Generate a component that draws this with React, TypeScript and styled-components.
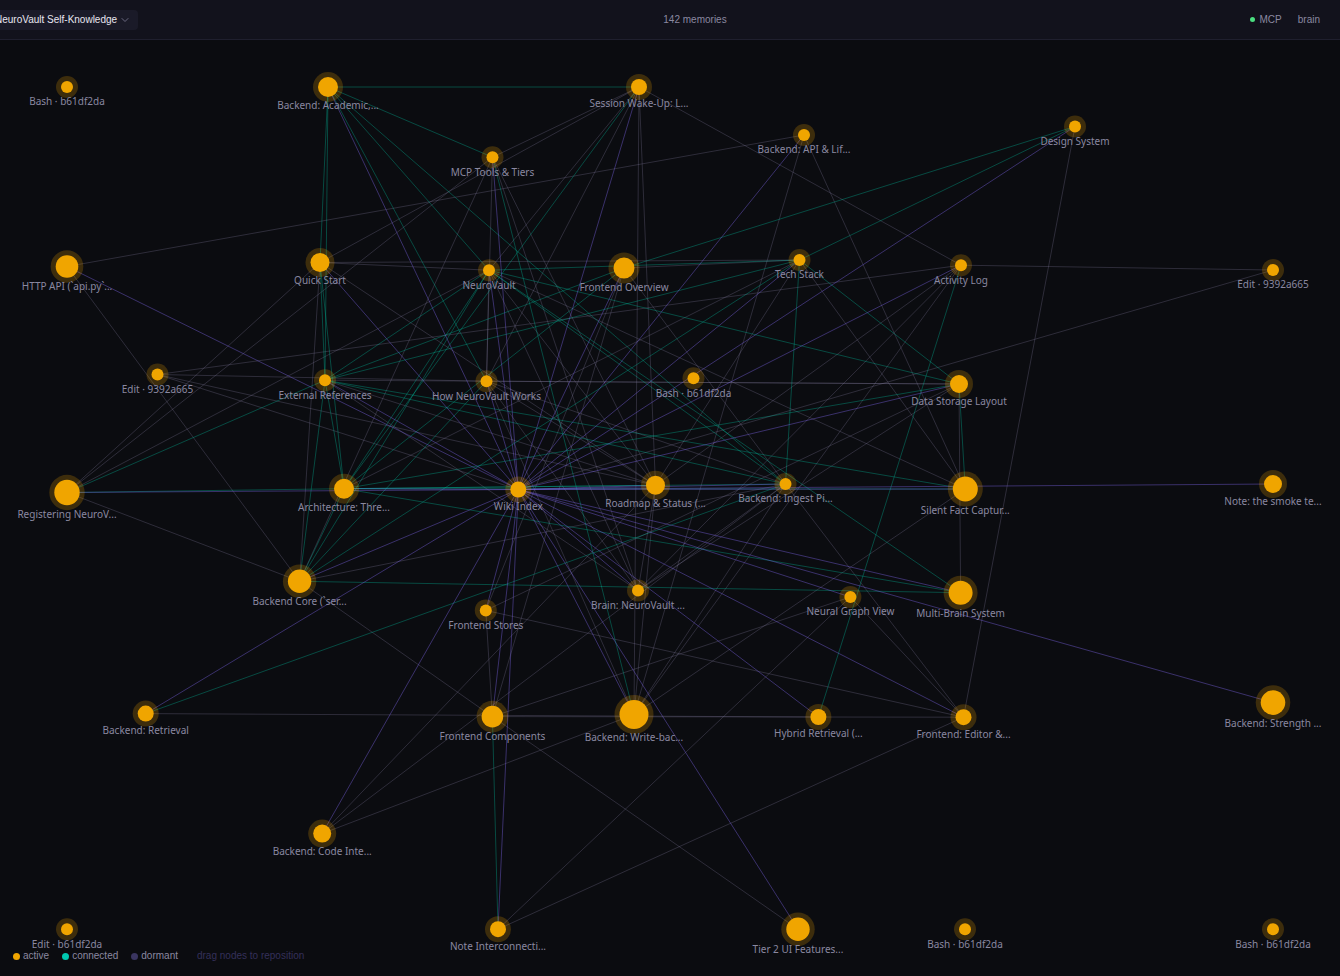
import React from "react";
import styled, { createGlobalStyle } from "styled-components";

const GlobalStyle = createGlobalStyle`
  html, body { margin: 0; padding: 0; background: #0b0c10; }
  *, *::before, *::after { box-sizing: border-box; }
`;

const Page = styled.div`
  display: flex;
  flex-direction: column;
  height: 100vh;
  overflow: hidden;
  background: #0b0c10;
  color: #8a88a0;
  font-family: "Liberation Sans", Arial, sans-serif;
  font-size: 10px;
  line-height: 12px;
`;

const TopBar = styled.header`
  display: grid;
  grid-template-columns: 1fr auto 1fr;
  align-items: center;
  flex: none;
  height: 40px;
  padding-right: 20px;
  padding-left: 70px;
  background: #12121c;
  border-bottom: 1px solid #1f1f2e;
`;

const VaultButton = styled.button`
  display: flex;
  align-items: center;
  justify-self: start;
  gap: 3px;
  height: 20px;
  margin-left: -86px;
  padding: 0 8px 0 11px;
  border: 0;
  border-radius: 4px;
  background: #1a1a28;
  color: #e8e6f0;
  font: inherit;
  white-space: nowrap;
  cursor: pointer;
`;

const Chevron = styled.svg`
  display: block;
  width: 10px;
  height: 10px;
  fill: none;
  stroke: #6a6880;
  stroke-linecap: round;
  stroke-linejoin: round;
`;

const MemoryCount = styled.span`
  white-space: nowrap;
`;

const StatusGroup = styled.div`
  display: flex;
  align-items: center;
  justify-self: end;
  gap: 16px;
`;

const Status = styled.span`
  display: flex;
  align-items: center;
  gap: 5px;
`;

const Dot = styled.span<{ $color: string; $size: number }>`
  width: ${(p) => p.$size}px;
  height: ${(p) => p.$size}px;
  border-radius: 50%;
  background: ${(p) => p.$color};
`;

const BrainButton = styled.button`
  padding: 0;
  border: 0;
  background: none;
  color: inherit;
  font: inherit;
  cursor: pointer;
`;

const Canvas = styled.main`
  position: relative;
  flex: 1;
  min-height: 0;
`;

const Graph = styled.svg`
  display: block;
  width: 100%;
  height: 100%;
`;

const EDGE_COLORS = {
  teal: "rgba(0, 201, 167, 0.33)",
  purple: "rgba(124, 100, 230, 0.42)",
  gray: "rgba(138, 130, 165, 0.28)",
};
type EdgeKind = keyof typeof EDGE_COLORS;

const Edge = styled.line<{ $kind: EdgeKind }>`
  stroke: ${(p) => EDGE_COLORS[p.$kind]};
  stroke-width: 1;
`;

const Halo = styled.circle`
  fill: rgba(240, 165, 0, 0.22);
`;

const Core = styled.circle`
  fill: #f0a500;
`;

const NodeLabel = styled.text`
  fill: #8a88a0;
  font-family: "Noto Sans", sans-serif;
  font-size: 10px;
  text-anchor: middle;
`;

const Legend = styled.footer`
  position: absolute;
  bottom: 14px;
  left: 13px;
  display: flex;
  align-items: center;
  gap: 13px;
`;

const LegendItem = styled.span`
  display: flex;
  align-items: center;
  gap: 3px;
`;

const Hint = styled.span`
  margin-left: 6px;
  color: #35305a;
`;

type GraphNode = [label: string, x: number, y: number, r: number];

const NODES: Record<string, GraphNode> = {
  bash1: ["Bash · b61df2da", 67, 87, 6],
  acad: ["Backend: Academic,...", 328, 87, 10],
  sess: ["Session Wake-Up: L...", 639, 87, 8],
  mcp: ["MCP Tools & Tiers", 492.5, 157.2, 6],
  api: ["Backend: API & Lif...", 804, 135, 6],
  design: ["Design System", 1075, 126.5, 6],
  http: ["HTTP API (`api.py`...", 67, 266.5, 11.3],
  quick: ["Quick Start", 320, 262.5, 9.5],
  neuro: ["NeuroVault", 489, 270.2, 6],
  overview: ["Frontend Overview", 624, 268, 10.5],
  tech: ["Tech Stack", 799.5, 260, 6],
  act: ["Activity Log", 961, 265.2, 6],
  edit1: ["Edit · 9392a665", 1273, 270, 6],
  edit2: ["Edit · 9392a665", 157.5, 374.5, 6],
  ext: ["External References", 325, 380.2, 6],
  how: ["How NeuroVault Works", 486.5, 381.2, 6],
  bash2: ["Bash · b61df2da", 693.5, 378.2, 6],
  data: ["Data Storage Layout", 959, 384, 9],
  reg: ["Registering NeuroV...", 67, 492.5, 12.7],
  arch: ["Architecture: Thre...", 344, 488.7, 10],
  wiki: ["Wiki Index", 518.3, 489.5, 8],
  road: ["Roadmap & Status (...", 655.5, 485.3, 9.5],
  ingest: ["Backend: Ingest Pi...", 785.5, 484, 6],
  silent: ["Silent Fact Captur...", 965.3, 489, 12.5],
  note: ["Note: the smoke te...", 1273, 484, 9],
  core: ["Backend Core (`ser...", 299.6, 581.3, 11.7],
  stores: ["Frontend Stores", 485.8, 610.4, 6],
  brain: ["Brain: NeuroVault ...", 638, 590.5, 6],
  ngv: ["Neural Graph View", 850.4, 597, 6],
  multi: ["Multi-Brain System", 960.6, 592.7, 12],
  retr: ["Backend: Retrieval", 145.7, 713.6, 8],
  comps: ["Frontend Components", 492.4, 716.6, 10.8],
  write: ["Backend: Write-bac...", 634, 714.5, 14.5],
  hybrid: ["Hybrid Retrieval (...", 818.4, 717, 8],
  editor: ["Frontend: Editor &...", 963.5, 717.2, 8],
  strength: ["Backend: Strength ...", 1273, 702.6, 12.3],
  code: ["Backend: Code Inte...", 322.2, 833.6, 9],
  inter: ["Note Interconnecti...", 498, 929.2, 8],
  tier: ["Tier 2 UI Features...", 798, 929.2, 11.7],
  edit3: ["Edit · b61df2da", 67, 929.2, 6],
  bash3: ["Bash · b61df2da", 965, 929.2, 6],
  bash4: ["Bash · b61df2da", 1273, 929.2, 6],
};

/* Links are listed per source node. */
const LINKS: Record<EdgeKind, Record<string, string>> = {
  gray: {
    sess: "neuro mcp quick how write road act",
    mcp: "reg how core road brain",
    api: "http write silent",
    http: "core",
    quick: "reg tech neuro road core",
    neuro: "reg how road brain silent",
    overview: "tech stores comps ingest",
    tech: "arch road silent",
    act: "edit2 road brain write edit1",
    edit1: "wiki",
    edit2: "how road wiki",
    ext: "data road brain",
    how: "data road brain write ingest",
    data: "multi stores brain",
    reg: "core",
    core: "ingest comps",
    road: "write brain code",
    ingest: "write brain code editor",
    silent: "write",
    stores: "comps editor",
    ngv: "comps inter editor",
    retr: "hybrid",
    comps: "editor tier",
    write: "code",
    editor: "inter design",
  },
  teal: {
    acad: "sess mcp ingest neuro how quick ext",
    quick: "ext arch",
    sess: "arch",
    neuro: "arch core ext tech ingest data multi",
    mcp: "write",
    tech: "design core ext ingest data",
    design: "overview",
    overview: "ext arch",
    how: "core",
    arch: "data multi core ext ingest silent road reg",
    ext: "silent ingest core reg",
    core: "multi",
    ingest: "retr",
    act: "hybrid",
    data: "silent",
    comps: "inter",
  },
  purple: {
    wiki:
      "acad mcp sess overview api tech act design data neuro quick ext how http reg arch core retr code stores comps inter write tier hybrid brain editor strength multi ngv road ingest silent note",
  },
};

const EDGES = (Object.keys(LINKS) as EdgeKind[]).flatMap((kind) =>
  Object.entries(LINKS[kind]).flatMap(([from, list]) =>
    list.split(" ").map((to) => ({ kind, from, to }))
  )
);

const LEGEND = [
  ["active", "#f0a500"],
  ["connected", "#00c9b1"],
  ["dormant", "#3a3560"],
];

export default function App() {
  return (
    <Page>
      <GlobalStyle />
      <TopBar>
        <VaultButton type="button">
          NeuroVault Self-Knowledge
          <Chevron viewBox="0 0 10 10" aria-hidden="true">
            <path d="M2 3.5 L5 6.5 L8 3.5" />
          </Chevron>
        </VaultButton>
        <MemoryCount>142 memories</MemoryCount>
        <StatusGroup>
          <Status>
            <Dot $color="#4ade80" $size={5} />
            MCP
          </Status>
          <BrainButton type="button">brain</BrainButton>
        </StatusGroup>
      </TopBar>
      <Canvas>
        <Graph viewBox="0 40 1340 936" role="img" aria-label="Memory graph">
          {EDGES.map(({ kind, from, to }) => (
            <Edge
              key={`${kind}-${from}-${to}`}
              $kind={kind}
              x1={NODES[from][1]}
              y1={NODES[from][2]}
              x2={NODES[to][1]}
              y2={NODES[to][2]}
            />
          ))}
          {Object.entries(NODES).map(([id, [label, x, y, r]]) => (
            <g key={id}>
              <Halo cx={x} cy={y} r={r + 5} />
              <Core cx={x} cy={y} r={r} />
              <NodeLabel x={x} y={Math.ceil(y + r + 12)}>
                {label}
              </NodeLabel>
            </g>
          ))}
        </Graph>
        <Legend>
          {LEGEND.map(([label, color]) => (
            <LegendItem key={label}>
              <Dot $color={color} $size={7} />
              {label}
            </LegendItem>
          ))}
          <Hint>drag nodes to reposition</Hint>
        </Legend>
      </Canvas>
    </Page>
  );
}
